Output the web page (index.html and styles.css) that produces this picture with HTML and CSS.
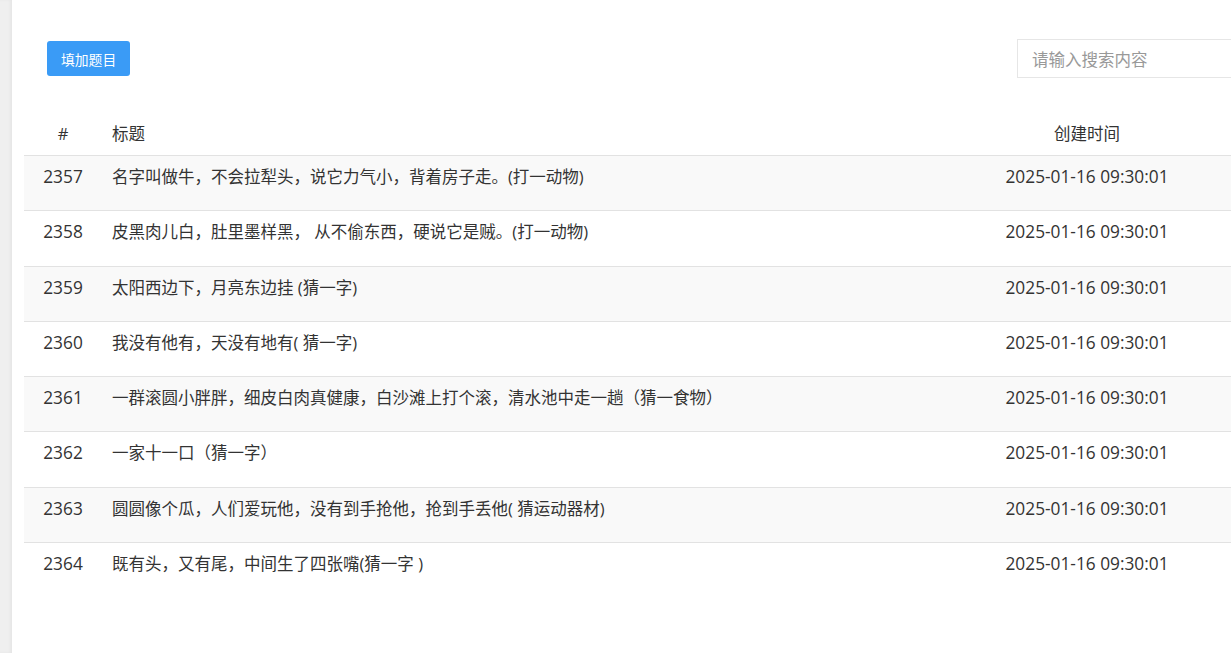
FILE: index.html
```html
<!DOCTYPE html>
<html lang="zh-CN">
  <head>
    <meta charset="UTF-8" />
    <meta name="viewport" content="width=device-width, initial-scale=1.0" />
    <title>题目列表</title>
    <link rel="stylesheet" href="styles.css">
  </head>
  <body>
    <div class="layout">
      <div class="side-strip"></div>
      <div class="main">
        <div class="toolbar">
          <button class="btn-add">填加题目</button>
          <input type="text" class="search" placeholder="请输入搜索内容" />
        </div>

        <table class="list-table">
          <thead>
            <tr>
              <th class="col-id">#</th>
              <th class="col-title">标题</th>
              <th class="col-time">创建时间</th>
              <th class="col-op"></th>
            </tr>
          </thead>
          <tbody>
            <tr>
              <td class="col-id">2357</td>
              <td class="col-title">名字叫做牛，不会拉犁头，说它力气小，背着房子走。(打一动物)</td>
              <td class="col-time">2025-01-16 09:30:01</td>
              <td class="col-op"></td>
            </tr>
            <tr>
              <td class="col-id">2358</td>
              <td class="col-title">皮黑肉儿白，肚里墨样黑， 从不偷东西，硬说它是贼。(打一动物)</td>
              <td class="col-time">2025-01-16 09:30:01</td>
              <td class="col-op"></td>
            </tr>
            <tr>
              <td class="col-id">2359</td>
              <td class="col-title">太阳西边下，月亮东边挂 (猜一字)</td>
              <td class="col-time">2025-01-16 09:30:01</td>
              <td class="col-op"></td>
            </tr>
            <tr>
              <td class="col-id">2360</td>
              <td class="col-title">我没有他有，天没有地有( 猜一字)</td>
              <td class="col-time">2025-01-16 09:30:01</td>
              <td class="col-op"></td>
            </tr>
            <tr>
              <td class="col-id">2361</td>
              <td class="col-title">一群滚圆小胖胖，细皮白肉真健康，白沙滩上打个滚，清水池中走一趟（猜一食物）</td>
              <td class="col-time">2025-01-16 09:30:01</td>
              <td class="col-op"></td>
            </tr>
            <tr>
              <td class="col-id">2362</td>
              <td class="col-title">一家十一口（猜一字）</td>
              <td class="col-time">2025-01-16 09:30:01</td>
              <td class="col-op"></td>
            </tr>
            <tr>
              <td class="col-id">2363</td>
              <td class="col-title">圆圆像个瓜，人们爱玩他，没有到手抢他，抢到手丢他( 猜运动器材)</td>
              <td class="col-time">2025-01-16 09:30:01</td>
              <td class="col-op"></td>
            </tr>
            <tr>
              <td class="col-id">2364</td>
              <td class="col-title">既有头，又有尾，中间生了四张嘴(猜一字 )</td>
              <td class="col-time">2025-01-16 09:30:01</td>
              <td class="col-op"></td>
            </tr>
          </tbody>
        </table>
      </div>
    </div>
  </body>
</html>
```

FILE: styles.css
```css
body {
  margin: 0;
  padding: 0;
  background-color: #fff;
  font-family: "Open Sans", "Noto Sans CJK SC", sans-serif;
  color: #333;
  overflow: hidden;
}

.layout {
  display: flex;
  min-height: 653px;
}

.side-strip {
  width: 12px;
  flex-shrink: 0;
  background-color: #efefef;
  box-shadow: inset -2px 0 3px rgba(0, 0, 0, 0.04);
}

.main {
  width: 1300px;
  flex-shrink: 0;
  padding: 0 12px;
  box-sizing: border-box;
}

.toolbar {
  display: flex;
  align-items: center;
  justify-content: space-between;
  padding: 39px 0 0 23px;
  height: 39px;
}

.btn-add {
  height: 35px;
  padding: 0 14px;
  font-family: "Noto Sans CJK SC", sans-serif;
  font-size: 13.8px;
  border: none;
  border-radius: 3px;
  background-color: #3a9bf6;
  color: #fff;
  cursor: pointer;
}

.search {
  width: 283px;
  height: 39px;
  box-sizing: border-box;
  padding: 0 14px;
  border: 1px solid #e6e6e6;
  border-right: none;
  font-family: "Noto Sans CJK SC", sans-serif;
  font-size: 16.5px;
  color: #333;
  outline: none;
}

.search::placeholder {
  color: #999;
}

.list-table {
  width: 100%;
  margin-top: 33px;
  border-collapse: collapse;
  table-layout: fixed;
  font-size: 16.5px;
}

.list-table th {
  font-weight: normal;
  height: 44px;
  padding: 0;
  border-bottom: 1px solid #e2e2e2;
  vertical-align: middle;
}

.list-table td {
  height: 55.3px;
  padding: 9px 0 0;
  box-sizing: border-box;
  vertical-align: top;
  line-height: 24px;
  border-bottom: 1px solid #e2e2e2;
}

.list-table tbody tr:nth-child(odd) td {
  background-color: #f9f9f9;
}

.list-table tbody tr:last-child td {
  border-bottom: none;
}

.list-table td.col-id,
.list-table td.col-time {
  font-size: 17.3px;
}

.col-id {
  width: 78px;
  text-align: center;
}

.col-title {
  text-align: left;
  padding-left: 10px !important;
}

.col-time {
  width: 200px;
  text-align: center;
}

.col-op {
  width: 113px;
}
```
